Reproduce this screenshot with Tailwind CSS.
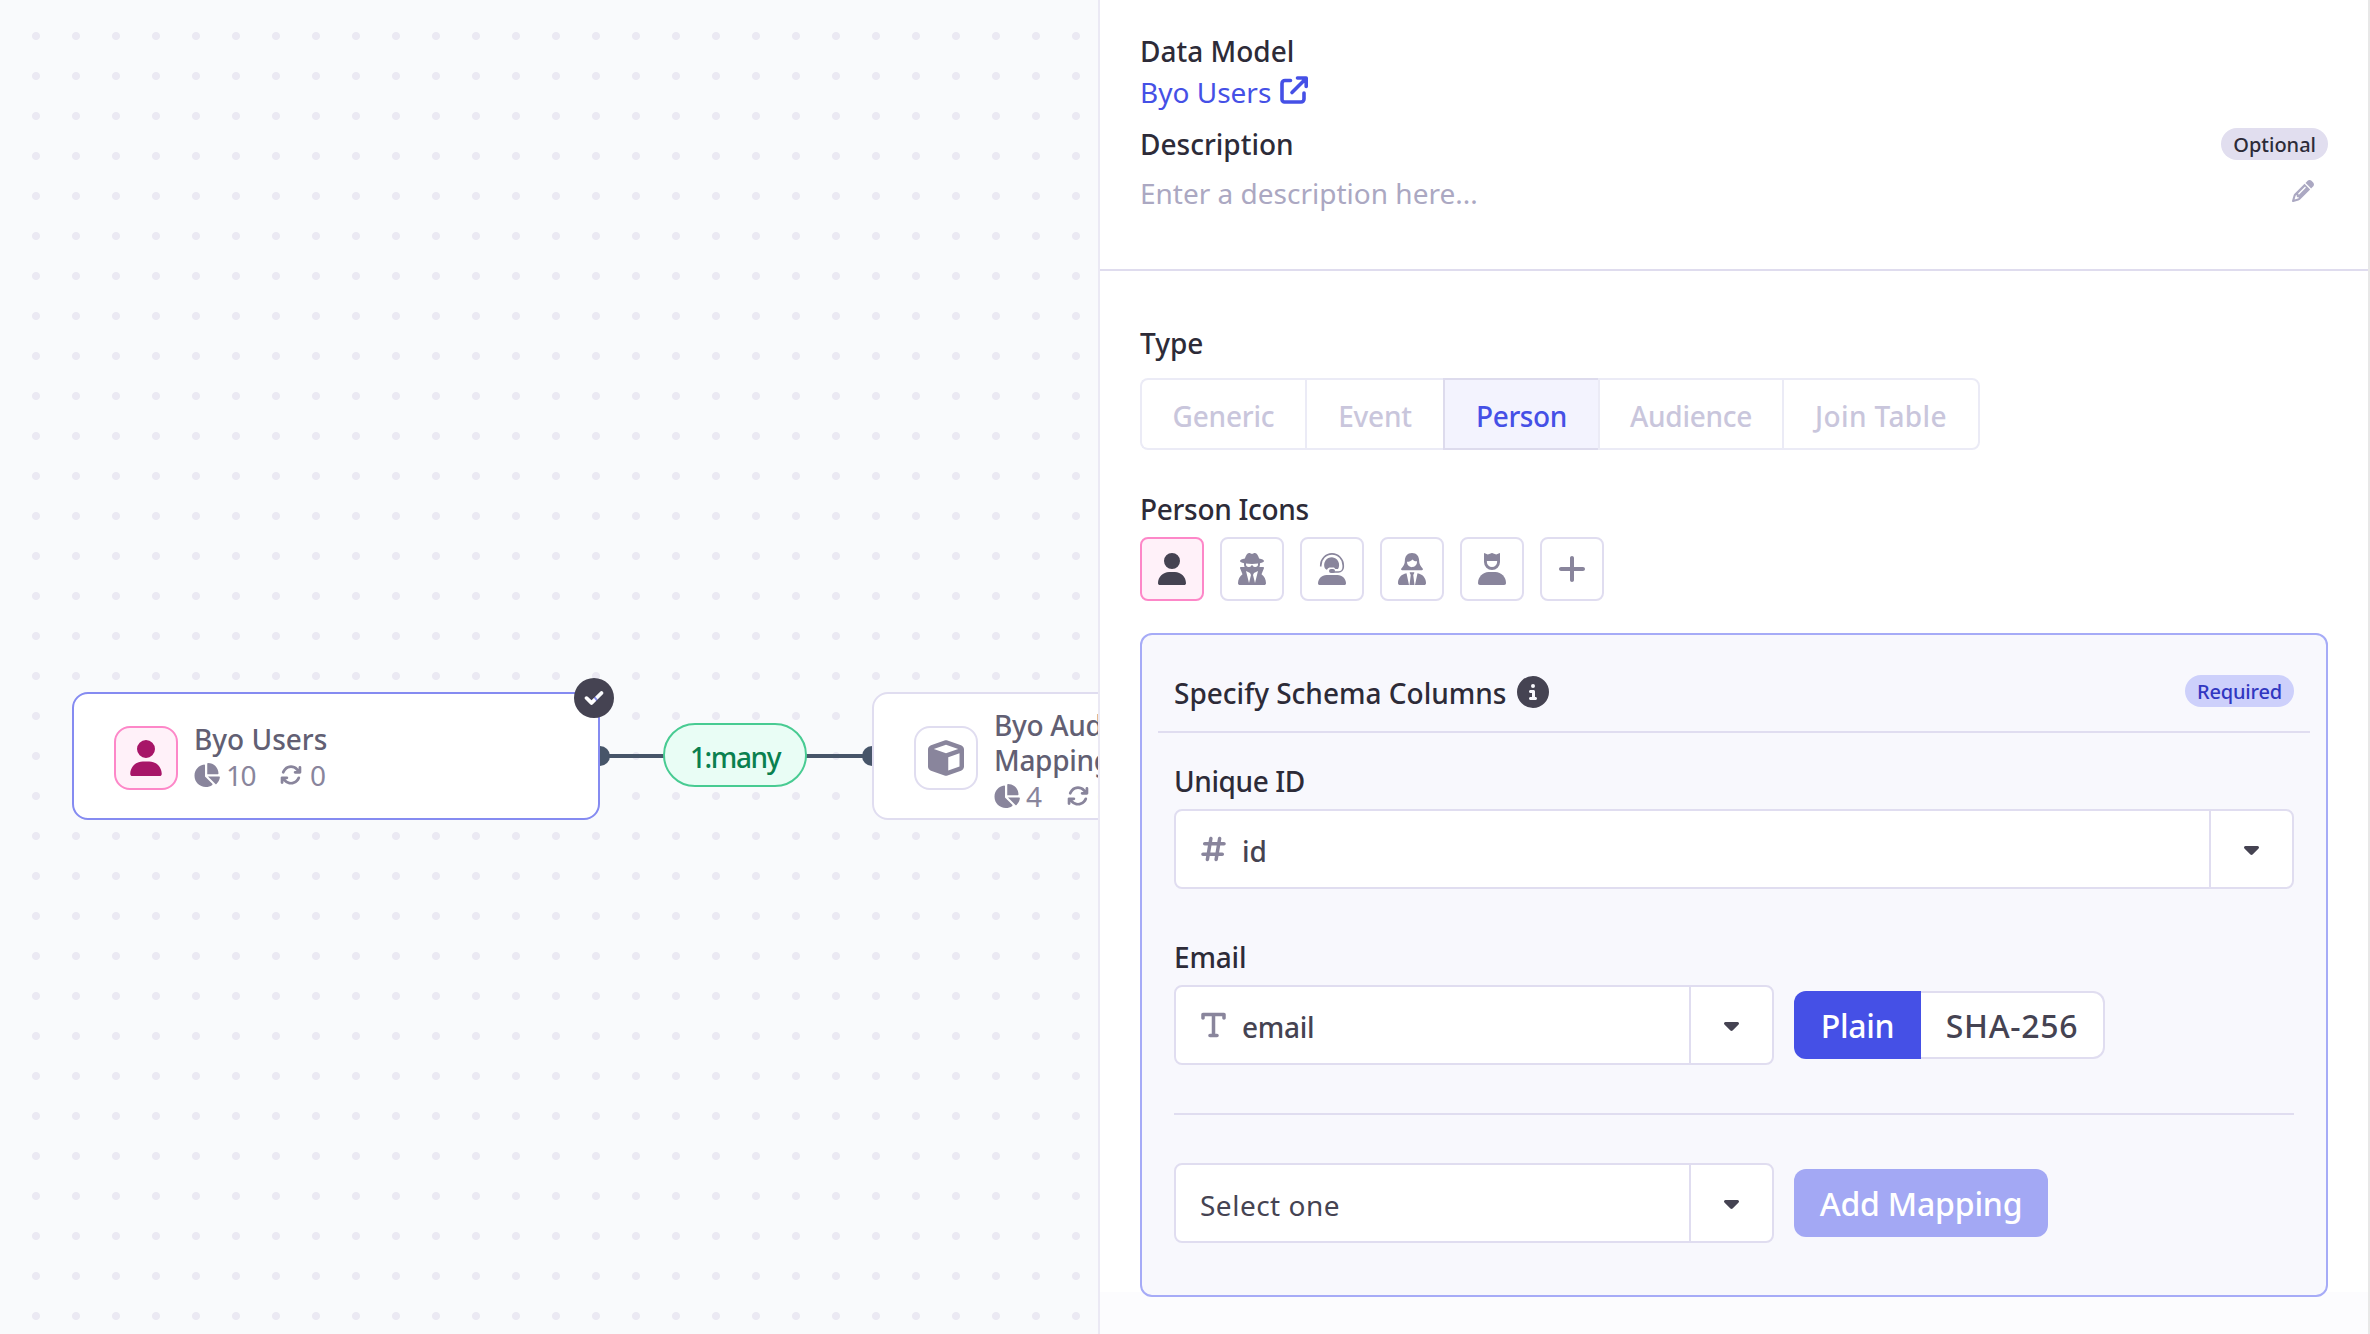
<!DOCTYPE html>
<html lang="en">
<head>
<meta charset="utf-8">
<title>Schema</title>
<script src="https://cdn.jsdelivr.net/npm/@tailwindcss/browser@4"></script>
</head>
<body class="w-[2370px] h-[1334px] overflow-hidden bg-white font-['Noto_Sans',sans-serif] text-[28px] leading-10 text-[#2d2b38]">
<svg class="hidden">
  <symbol id="user" viewBox="0 0 448 512"><path d="M224 256A128 128 0 1 0 224 0a128 128 0 1 0 0 256zm-45.7 48C79.8 304 0 383.8 0 482.3C0 498.7 13.3 512 29.7 512H418.3c16.4 0 29.7-13.3 29.7-29.7C448 383.8 368.2 304 269.7 304H178.3z"/></symbol>
  <symbol id="secret" viewBox="0 0 448 512"><path d="M224 16c-6.7 0-10.8-2.8-15.5-6.1C201.9 5.4 194 0 176 0c-30.5 0-52 43.7-66 89.4C62.7 98.1 32 112.2 32 128c0 14.3 25 27.1 64.6 35.9c-.4 4-.6 8-.6 12.1c0 17 3.3 33.2 9.3 48H45.4C38 224 32 230 32 237.4c0 1.7 .3 3.4 1 5l38.8 96.9C28.2 371.8 0 423.8 0 482.3C0 498.7 13.3 512 29.7 512H418.3c16.4 0 29.7-13.3 29.7-29.7c0-58.5-28.2-110.4-71.7-143L415 242.4c.6-1.6 1-3.3 1-5c0-7.4-6-13.4-13.4-13.4H342.7c6-14.8 9.3-31 9.3-48c0-4.1-.2-8.1-.6-12.1C391 155.1 416 142.3 416 128c0-15.8-30.7-29.9-78-38.6C324 43.7 302.5 0 272 0c-18 0-25.9 5.4-32.5 9.9c-4.8 3.3-8.8 6.1-15.5 6.1zm56 208H267.6c-16.5 0-31.1-10.6-36.3-26.2c-2.3-7-12.2-7-14.5 0c-5.2 15.6-19.9 26.2-36.3 26.2H168c-22.1 0-40-17.9-40-40V169.6c28.2 4.1 61 6.4 96 6.4s67.8-2.3 96-6.4V184c0 22.1-17.9 40-40 40zm-88 96l16 32L176 480 128 288l64 32zm128-32L272 480 240 352l16-32 64-32z"/></symbol>
  <symbol id="headset" viewBox="0 0 448 512"><path d="M44 216V198a180 184 0 0 1 360 0v26c0 44-34 80-78 80H232" fill="none" stroke="currentColor" stroke-width="26"/><path d="M224 66a126 126 0 0 0-118 170c9 18 22 26 38 30 10-26 34-36 60-36h40c18 0 24 10 34 26h42a126 126 0 0 0-96-190z"/><rect x="176" y="256" width="96" height="64" rx="32"/><path d="M136 352C61 352 0 413 0 488c0 14 11 24 24 24h400c13 0 24-10 24-24 0-75-61-136-136-136z"/></symbol>
  <symbol id="hair" viewBox="0 0 448 512"><path fill-rule="evenodd" d="M224 0C150 0 110 56 110 120c0 60-24 88-56 128-10 14-2 26 12 26h316c14 0 22-12 12-26-32-40-56-68-56-128C338 56 298 0 224 0zM144 138c34 0 66-8 88-36 16 20 40 30 72 30v12a80 80 0 0 1-160 4z"/><path d="M136 324C56 336 0 400 0 478c0 22 12 34 32 34h144zM312 324c80 12 136 76 136 154 0 22-12 34-32 34H272zM196 306h56c7 0 11 8 8 14l-16 32 20 160h-80l20-160-16-32c-3-6 1-14 8-14z"/></symbol>
  <symbol id="crown" viewBox="0 0 448 512"><path fill-rule="evenodd" d="M96 8c0-6 8-10 13-6l47 22 58-22c6-3 14-3 20 0l58 22 47-22c5-4 13 0 13 6v136a128 128 0 0 1-256 0zM142 126v18a82 82 0 0 0 164 0v-18z"/><path d="M170 304C76 304 0 384 0 480c0 18 12 32 30 32h388c18 0 30-14 30-32 0-96-76-176-170-176z"/></symbol>
  <symbol id="plus" viewBox="0 0 448 512"><path d="M256 80c0-17.700-14.300-32-32-32s-32 14.300-32 32V224H48c-17.700 0-32 14.300-32 32s14.300 32 32 32H192V432c0 17.700 14.300 32 32 32s32-14.300 32-32V288H400c17.700 0 32-14.300 32-32s-14.300-32-32-32H256V80z"/></symbol>
  <symbol id="pie" viewBox="0 0 576 512"><path d="M304 240V16.600c0-9 7-16.600 16-16.600C443.700 0 544 100.300 544 224c0 9-7.600 16-16.600 16H304zM32 272C32 150.700 122.100 50.300 239 34.300c9.200-1.300 17 6.100 17 15.400V288L412.500 444.500c6.700 6.700 6.200 17.700-1.500 23.100C371.800 495.600 323.800 512 272 512C139.500 512 32 404.600 32 272zm526.400 16c9.300 0 16.600 7.800 15.400 17c-7.700 55.900-34.600 105.600-73.900 142.300c-6 5.600-15.400 5.200-21.200-.7L320 288H558.400z"/></symbol>
  <symbol id="sync" viewBox="0 0 512 512"><path d="M105.100 202.600c7.700-21.800 20.200-42.300 37.800-59.800c62.500-62.500 163.800-62.500 226.300 0L386.300 160H352c-17.700 0-32 14.300-32 32s14.300 32 32 32H463.500h.4c17.700 0 32-14.300 32-32V80c0-17.700-14.300-32-32-32s-32 14.300-32 32v35.200L414.400 97.600c-87.500-87.500-229.300-87.500-316.800 0C73.200 122 55.600 150.700 44.800 181.400c-5.900 16.700 2.900 34.900 19.500 40.800s34.900-2.900 40.800-19.500zM39 289.300c-5 1.500-9.800 4.200-13.700 8.200c-4 4-6.700 8.800-8.100 14c-.3 1.200-.6 2.500-.8 3.800c-.3 1.700-.4 3.400-.4 5.100V432c0 17.700 14.300 32 32 32s32-14.300 32-32V396.900l17.600 17.500c87.500 87.400 229.300 87.400 316.700 0c24.400-24.400 42.100-53.100 52.900-83.700c5.900-16.700-2.900-34.900-19.500-40.800s-34.900 2.900-40.800 19.500c-7.700 21.800-20.200 42.300-37.800 59.800c-62.500 62.500-163.800 62.500-226.300 0l-.1-.1L125.600 352H160c17.700 0 32-14.300 32-32s-14.300-32-32-32H48.400c-1.600 0-3.200 .1-4.800 .3s-3.100 .5-4.600 1z"/></symbol>
  <symbol id="cube" viewBox="0 0 512 512"><path d="M234.500 5.700c13.900-5 29.100-5 43.100 0l192 68.600C495 83.400 512 107.500 512 134.600V377.400c0 27-17 51.200-42.500 60.300l-192 68.600c-13.900 5-29.100 5-43.100 0l-192-68.600C17 428.600 0 404.500 0 377.400V134.600c0-27 17-51.200 42.500-60.300l192-68.600zM256 66L82.300 128 256 190l173.700-62L256 66zm32 368.600l160-57.100v-188L288 246.600v188z"/></symbol>
  <symbol id="check" viewBox="0 0 512 512"><path d="M256 512A256 256 0 1 0 256 0a256 256 0 1 0 0 512zM369 209L241 337c-9.400 9.400-24.600 9.400-33.900 0l-64-64c-9.400-9.400-9.400-24.600 0-33.900s24.600-9.400 33.900 0l47 47L335 175c9.400-9.400 24.600-9.400 33.900 0s9.400 24.600 0 33.900z"/></symbol>
  <symbol id="info" viewBox="0 0 512 512"><path d="M256 512A256 256 0 1 0 256 0a256 256 0 1 0 0 512zM216 336h24V272H216c-13.300 0-24-10.700-24-24s10.700-24 24-24h48c13.300 0 24 10.700 24 24v88h8c13.300 0 24 10.700 24 24s-10.700 24-24 24H216c-13.300 0-24-10.700-24-24s10.700-24 24-24zm40-208a32 32 0 1 1 0 64 32 32 0 1 1 0-64z"/></symbol>
  <symbol id="pencil" viewBox="0 0 512 512"><path d="M410.300 231l11.300-11.300-33.900-33.900-62.100-62.100L291.700 89.800l-11.300 11.300-22.600 22.600L58.600 322.900c-10.400 10.400-18 23.300-22.200 37.400L1 480.700c-2.500 8.400-.2 17.500 6.100 23.700s15.300 8.500 23.700 6.100l120.300-35.400c14.100-4.200 27-11.800 37.400-22.200L387.700 253.700 410.300 231zM160 399.400l-9.100 22.700c-4 3.100-8.500 5.400-13.300 6.900L59.400 452l23-78.100c1.400-4.900 3.800-9.400 6.900-13.300l22.700-9.100v32c0 8.800 7.200 16 16 16h32zM362.700 18.700L348.300 33.200 325.700 55.800 314.300 67.100l33.900 33.900 62.100 62.100 33.900 33.900 11.300-11.300 22.600-22.600 14.500-14.500c25-25 25-65.500 0-90.500L453.300 18.700c-25-25-65.500-25-90.500 0zm-47.400 168l-144 144c-6.200 6.200-16.400 6.200-22.600 0s-6.200-16.400 0-22.600l144-144c6.200-6.200 16.400-6.200 22.600 0s6.200 16.400 0 22.600z"/></symbol>
  <symbol id="hash" viewBox="0 0 448 512"><path d="M181.300 32.400c17.400 2.900 29.200 19.400 26.300 36.800L197.800 128h95.100l11.500-69.300c2.900-17.400 19.400-29.200 36.800-26.300s29.200 19.400 26.300 36.800L357.800 128H416c17.700 0 32 14.300 32 32s-14.300 32-32 32H347.100L325.800 320H384c17.700 0 32 14.300 32 32s-14.300 32-32 32H315.100l-11.500 69.300c-2.900 17.400-19.400 29.200-36.800 26.300s-29.200-19.400-26.300-36.800l9.800-58.700H155.100l-11.500 69.300c-2.900 17.400-19.400 29.200-36.800 26.300s-29.200-19.400-26.300-36.800L90.200 384H32c-17.700 0-32-14.300-32-32s14.300-32 32-32h68.900l21.300-128H64c-17.700 0-32-14.300-32-32s14.300-32 32-32h68.900l11.500-69.300c2.900-17.400 19.400-29.200 36.800-26.300zM187.100 192L165.800 320h95.100l21.300-128H187.100z"/></symbol>
  <symbol id="texttype" viewBox="0 0 448 512"><path d="M32 32C14.300 32 0 46.300 0 64v64c0 17.700 14.300 32 32 32s32-14.300 32-32V96H192V416H160c-17.700 0-32 14.300-32 32s14.300 32 32 32H288c17.700 0 32-14.300 32-32s-14.300-32-32-32H256V96H384v32c0 17.700 14.300 32 32 32s32-14.300 32-32V64c0-17.700-14.300-32-32-32H32z"/></symbol>
  <symbol id="caret" viewBox="0 0 320 512"><path d="M137.400 374.600c12.500 12.500 32.800 12.500 45.300 0l128-128c9.200-9.200 11.900-22.900 6.900-34.900s-16.600-19.800-29.600-19.800L32 192c-12.900 0-24.600 7.800-29.600 19.800s-2.200 25.700 6.900 34.900l128 128z"/></symbol>
</svg>

<div class="flex h-full">
  <!-- Canvas -->
  <main class="relative w-[1098px] h-full shrink-0 overflow-hidden bg-[#f9fafc] bg-[radial-gradient(circle,#ebe9f3_3.6px,transparent_4.4px)] bg-size-[40px_40px] bg-position-[16px_16px]">
    <div class="absolute left-[590px] top-[746px] size-5 rounded-full bg-[#475569]"></div>
    <div class="absolute left-[862px] top-[746px] size-5 rounded-full bg-[#475569]"></div>
    <div class="absolute left-[600px] top-[754px] w-[272px] h-1 bg-[#475569]"></div>
    <div class="absolute left-[663px] top-[723px] w-36 h-16 rounded-full border-2 border-[#48cb92] bg-[#e9fdf5] flex items-center justify-center font-[550] text-[#0a804f] tracking-[-1.4px] pt-[3px]">1:many</div>

    <div class="absolute left-[72px] top-[692px] w-[528px] h-32 rounded-2xl border-2 border-[#858bf1] bg-white flex gap-4 pl-10">
      <div class="mt-8 size-16 shrink-0 rounded-2xl border-2 border-[#fd87c8] bg-[#fff1f9] flex items-center justify-center">
        <svg class="w-8 h-9 fill-[#a71568]"><use href="#user"/></svg>
      </div>
      <div class="pt-7 leading-[35px]">
        <div class="font-medium text-[#625f73]">Byo Users</div>
        <div class="flex items-center h-9 text-[#89859c]">
          <svg class="-ml-px w-[27px] h-6 fill-current"><use href="#pie"/></svg><span class="ml-1.5 tracking-[-1.5px]">10</span>
          <svg class="ml-[25px] size-[22px] fill-current"><use href="#sync"/></svg><span class="ml-2">0</span>
        </div>
      </div>
    </div>
    <svg class="absolute left-[574px] top-[678px] size-10 fill-[#454352]"><use href="#check"/></svg>

    <div class="absolute left-[872px] top-[692px] w-[528px] h-32 rounded-2xl border-2 border-[#e0ddf0] bg-white flex gap-4 pl-10">
      <div class="mt-8 size-16 shrink-0 rounded-2xl border-2 border-[#e0ddf0] bg-white flex items-center justify-center">
        <svg class="size-9 fill-[#89859c]"><use href="#cube"/></svg>
      </div>
      <div class="pt-3.5 leading-[35px]">
        <div class="w-[220px] font-medium text-[#625f73] tracking-[-0.3px]">Byo Audience Mapping</div>
        <div class="flex items-center h-9 text-[#89859c]">
          <svg class="-ml-px w-[27px] h-6 fill-current"><use href="#pie"/></svg><span class="ml-1.5">4</span>
          <svg class="ml-[25px] size-[22px] fill-current"><use href="#sync"/></svg><span class="ml-2">0</span>
        </div>
      </div>
    </div>
  </main>

  <!-- Side panel -->
  <aside class="relative isolate flex-1 h-full border-l-2 border-l-[#ebe9f4] border-r-2 border-r-[#e8e8e8] bg-white">
    <div class="absolute -z-10 inset-x-0 bottom-0 h-[42px] bg-[#fcfcfe]"></div>
    <section class="h-[271px] border-b-2 border-[#dfdcee] px-10 pt-[31px]">
      <h3 class="font-[550]">Data Model</h3>
      <a class="mt-px flex text-[#4550e6]">Byo Users
        <svg class="ml-2 mt-[3px] size-[30px]" viewBox="0 0 30 30" fill="none" stroke="currentColor" stroke-width="3.6" stroke-linecap="round" stroke-linejoin="round"><path d="M11.500 5.500H6a3 3 0 0 0-3 3V24.500a2.500 2.500 0 0 0 2.500 2.500H22a3 3 0 0 0 3-3V18M13 17.500L27 3.500M18.500 3H27.200V11.500"/></svg>
      </a>
      <div class="mt-3 flex items-start justify-between">
        <h3 class="font-[550]">Description</h3>
        <span class="mt-1 h-8 px-3 rounded-full bg-[#e1deef] text-xl leading-[33px] font-[550]">Optional</span>
      </div>
      <div class="mt-[9px] flex items-start justify-between text-[#aba8c2]">
        <span>Enter a description here...</span>
        <svg class="mt-[7px] mr-3.5 size-[22px] fill-current"><use href="#pencil"/></svg>
      </div>
    </section>

    <section class="px-10 pt-[52px]">
      <h3 class="font-[550]">Type</h3>
      <div class="mt-[15px] flex w-[840px] h-[72px] font-[550] text-[#c9c6dc]">
        <div class="w-[165px] pt-[3px] flex items-center justify-center rounded-l-lg border-2 border-r-0 border-[#ebebf6] tracking-[-0.2px]">Generic</div>
        <div class="w-[138px] pt-[3px] flex items-center justify-center border-y-2 border-l-2 border-[#ebebf6] tracking-[-0.2px]">Event</div>
        <div class="w-[155px] pt-[3px] flex items-center justify-center border-y-2 border-l-2 border-[#dddbed] bg-[#f3f3fe] text-[#4550e6] tracking-[-0.4px]">Person</div>
        <div class="w-[184px] pt-[3px] flex items-center justify-center border-y-2 border-l-2 border-[#ebebf6] tracking-[-0.3px]">Audience</div>
        <div class="flex-1 pt-[3px] flex items-center justify-center rounded-r-lg border-2 border-[#ebebf6] tracking-[0.4px]">Join Table</div>
      </div>
      <h3 class="mt-[39px] font-[550] tracking-[-0.3px]">Person Icons</h3>
      <div class="mt-2 flex gap-4 text-[#89859c]">
        <div class="size-16 rounded-lg border-2 border-[#fd87c8] bg-[#fff1f9] flex items-center justify-center"><svg class="w-7 h-8 fill-[#454352]"><use href="#user"/></svg></div>
        <div class="size-16 rounded-lg border-2 border-[#e0ddf0] flex items-center justify-center"><svg class="w-7 h-8 fill-current"><use href="#secret"/></svg></div>
        <div class="size-16 rounded-lg border-2 border-[#e0ddf0] flex items-center justify-center"><svg class="w-7 h-8 fill-current"><use href="#headset"/></svg></div>
        <div class="size-16 rounded-lg border-2 border-[#e0ddf0] flex items-center justify-center"><svg class="w-7 h-8 fill-current"><use href="#hair"/></svg></div>
        <div class="size-16 rounded-lg border-2 border-[#e0ddf0] flex items-center justify-center"><svg class="w-7 h-8 fill-current"><use href="#crown"/></svg></div>
        <div class="size-16 rounded-lg border-2 border-[#e0ddf0] flex items-center justify-center"><svg class="w-7 h-8 fill-current"><use href="#plus"/></svg></div>
      </div>

      <div class="mt-8 h-[664px] rounded-xl border-2 border-[#a6abf7] bg-[#f8f8fd]">
        <div class="mx-4 px-4 h-[98px] border-b-2 border-[#e0ddf0] flex items-center pt-[18px]">
          <h3 class="w-[343px] pt-px whitespace-nowrap font-[550]">Specify Schema Columns</h3>
          <svg class="size-8 fill-[#454352]"><use href="#info"/></svg>
          <span class="ml-auto -mt-0.5 w-[109px] text-center h-8 rounded-full bg-[#cdd0fb] text-xl leading-[33px] font-[550] tracking-[-0.2px] text-[#3137c1]">Required</span>
        </div>
        <div class="px-8">
          <h4 class="mt-7 font-[550] tracking-[-0.4px]">Unique ID</h4>
          <div class="mt-2 flex h-20 rounded-lg border-2 border-[#e0ddf0] bg-white text-[#454352]">
            <div class="flex-1 flex items-center pl-[25px] font-medium"><svg class="w-[25px] h-7 fill-[#89859c]"><use href="#hash"/></svg><span class="ml-4 pt-[3px]">id</span></div>
            <div class="w-[83px] border-l-2 border-[#e0ddf0] flex items-center justify-center"><svg class="w-[15px] h-6 fill-current"><use href="#caret"/></svg></div>
          </div>
          <h4 class="mt-12 font-[550] tracking-[-0.2px]">Email</h4>
          <div class="mt-2 flex items-center gap-5">
            <div class="flex w-[600px] h-20 rounded-lg border-2 border-[#e0ddf0] bg-white text-[#454352]">
              <div class="flex-1 flex items-center pl-[25px] font-medium"><svg class="w-[25px] h-7 fill-[#89859c]"><use href="#texttype"/></svg><span class="ml-4 pt-[3px] tracking-[-0.3px]">email</span></div>
              <div class="w-[83px] border-l-2 border-[#e0ddf0] flex items-center justify-center"><svg class="w-[15px] h-6 fill-current"><use href="#caret"/></svg></div>
            </div>
            <div class="flex h-[68px] text-[32px] font-[550]">
              <div class="w-[127px] flex items-center justify-center rounded-l-xl bg-[#4550e6] text-white tracking-[-0.3px] pt-0.5">Plain</div>
              <div class="w-[184px] flex items-center justify-center rounded-r-xl border-2 border-l-0 border-[#e0ddf0] bg-white text-[#454352] tracking-[0.7px] pt-0.5">SHA-256</div>
            </div>
          </div>
          <div class="mt-12 h-0.5 bg-[#e0ddf0]"></div>
          <div class="mt-12 flex items-center gap-5">
            <div class="flex w-[600px] h-20 rounded-lg border-2 border-[#e0ddf0] bg-white text-[#454352]">
              <div class="flex-1 flex items-center pl-6 pt-[3px] tracking-[0.5px]">Select one</div>
              <div class="w-[83px] border-l-2 border-[#e0ddf0] flex items-center justify-center"><svg class="w-[15px] h-6 fill-current"><use href="#caret"/></svg></div>
            </div>
            <div class="w-[254px] h-[68px] rounded-xl bg-[#a3a8f4] flex items-center justify-center text-[32px] font-medium tracking-[-0.2px] text-white pt-0.5">Add Mapping</div>
          </div>
        </div>
      </div>
    </section>
  </aside>
</div>
</body>
</html>
